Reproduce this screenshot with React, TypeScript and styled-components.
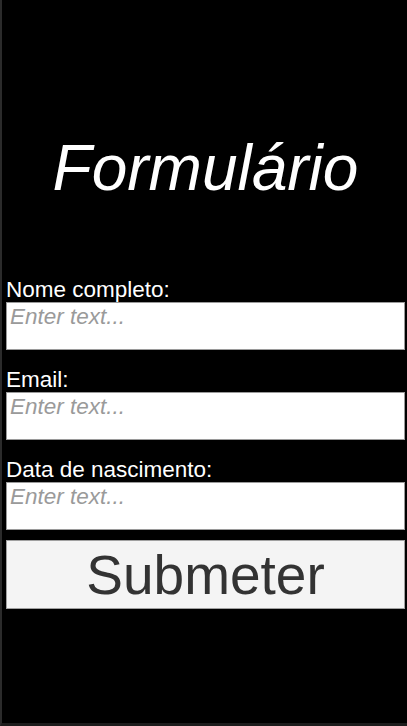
import React from "react";
import styled, { createGlobalStyle } from "styled-components";

const GlobalStyle = createGlobalStyle`
  html, body {
    margin: 0;
    padding: 0;
    background: #1c1c1c;
  }
  * { box-sizing: border-box; }
`;

const Screen = styled.div`
  width: 407px;
  height: 726px;
  background: #000;
  border-left: 2px solid #2b2b2b;
  border-bottom: 3px solid #1c1c1c;
  padding: 131px 2px 0 4px;
  display: flex;
  flex-direction: column;
  font-family: "Liberation Sans", Arial, sans-serif;
`;

const Title = styled.h1`
  margin: 0 0 73px 0;
  font-size: 64px;
  line-height: 74px;
  font-weight: normal;
  font-style: italic;
  color: #fff;
  text-align: center;
`;

const Form = styled.form`
  display: flex;
  flex-direction: column;
`;

const Field = styled.div`
  display: flex;
  flex-direction: column;
  margin-bottom: 18px;
`;

const Label = styled.label`
  color: #fff;
  font-size: 22.5px;
  line-height: 24px;
`;

const TextBox = styled.textarea`
  display: block;
  width: 100%;
  height: 48px;
  margin: 0;
  resize: none;
  background: #fff;
  border: 1px solid #9a9a9a;
  border-radius: 0;
  padding: 2px 3px;
  font-family: "Liberation Sans", Arial, sans-serif;
  font-size: 22.5px;
  line-height: 24px;
  color: #222;
  outline: none;
  overflow: hidden;
  &::placeholder {
    color: #9a9a9a;
    font-style: italic;
  }
`;

const SubmitButton = styled.button`
  margin-top: -8px;
  height: 69px;
  width: 100%;
  background: #f4f4f4;
  border: 1px solid #a0a0a0;
  border-radius: 0;
  color: #333;
  font-family: "Liberation Sans", Arial, sans-serif;
  font-size: 55px;
  line-height: 62px;
  padding: 0;
  cursor: pointer;
`;

const fields = ["Nome completo:", "Email:", "Data de nascimento:"];

export default function App() {
  return (
    <>
      <GlobalStyle />
      <Screen>
        <Title>Formulário</Title>
        <Form onSubmit={(e) => e.preventDefault()}>
          {fields.map((f, i) => (
            <Field key={f}>
              <Label htmlFor={`f${i}`}>{f}</Label>
              <TextBox id={`f${i}`} placeholder="Enter text..." />
            </Field>
          ))}
          <SubmitButton type="submit">Submeter</SubmitButton>
        </Form>
      </Screen>
    </>
  );
}
